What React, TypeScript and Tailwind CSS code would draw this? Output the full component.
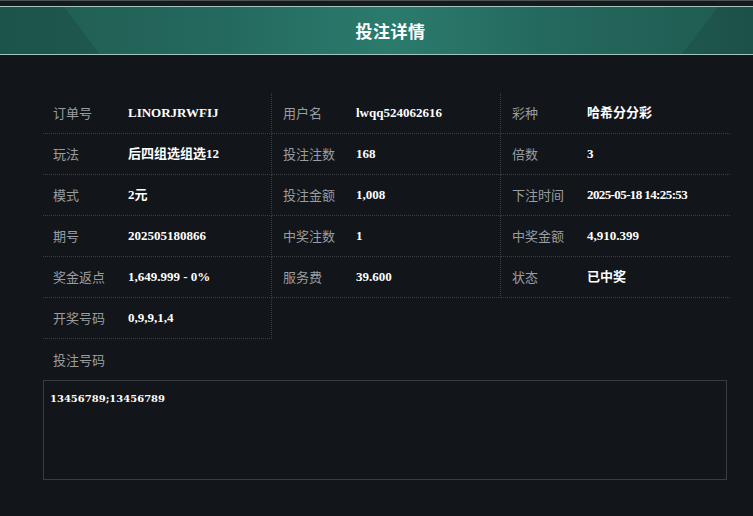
import React from 'react'

const rows: [string, string][][] = [
  [
    ['订单号', 'LINORJRWFIJ'],
    ['用户名', 'lwqq524062616'],
    ['彩种', '哈希分分彩'],
  ],
  [
    ['玩法', '后四组选组选12'],
    ['投注注数', '168'],
    ['倍数', '3'],
  ],
  [
    ['模式', '2元'],
    ['投注金额', '1,008'],
    ['下注时间', '2025-05-18 14:25:53'],
  ],
  [
    ['期号', '202505180866'],
    ['中奖注数', '1'],
    ['中奖金额', '4,910.399'],
  ],
  [
    ['奖金返点', '1,649.999 - 0%'],
    ['服务费', '39.600'],
    ['状态', '已中奖'],
  ],
  [['开奖号码', '0,9,9,1,4']],
]

function Cell({ label, value, col }: { label: string; value: string; col: number }) {
  const isDate = value.includes(':')
  return (
    <div
      className={`flex items-center h-[41px] border-b border-dotted border-[#3a3f44] ${
        col < 2 ? 'border-r' : ''
      } ${col === 0 ? 'pl-[10px]' : 'pl-[11px]'}`}
    >
      <span className={`${col === 1 ? 'w-[73px]' : 'w-[75px]'} shrink-0 text-[13px] text-[#9a9da0]`}>{label}</span>
      <span
        className={`text-[13px] font-bold text-white [font-family:'Liberation_Serif','Noto_Sans_CJK_SC',serif] ${
          isDate ? 'tracking-[-0.6px]' : ''
        }`}
      >
        {value}
      </span>
    </div>
  )
}

export default function App() {
  return (
    <div className="w-[753px] h-[516px] bg-[#121519] overflow-hidden [font-family:'Noto_Sans_CJK_SC','Noto_Sans',sans-serif]">
      {/* top strip */}
      <div className="h-[1px] bg-[#4d5255]" />
      <div className="h-[5px] bg-[#151a1d]" />

      {/* Header */}
      <div className="relative h-[49px] border-t border-b border-[#a6c4be] bg-[linear-gradient(90deg,#1f5c51_0%,#25695e_30%,#2b7b6d_52%,#25695e_72%,#1f5a50_100%)] flex items-center justify-center pl-[28px]">
        <svg className="absolute inset-0 w-full h-full" viewBox="0 0 753 47" preserveAspectRatio="none">
          <polygon points="0,0 64,0 100,47 0,47" fill="#0e2f2a" opacity="0.18" />
          <polygon points="718,0 753,0 753,47 682,47" fill="#0e2f2a" opacity="0.18" />
        </svg>
        <span className="relative text-[17px] font-bold text-white tracking-[0.5px]">投注详情</span>
      </div>

      {/* Body */}
      <div className="pl-[43px] pr-[23px] pt-[38px]">
        <div className="grid grid-cols-3">
          {rows.map((r, ri) =>
            r.map(([label, value], ci) => (
              <Cell key={`${ri}-${ci}`} label={label} value={value} col={ci} />
            ))
          )}
        </div>

        <div className="pl-[10px] h-[41px] flex items-center text-[13px] text-[#9a9da0]">投注号码</div>

        <div className="w-[684px] h-[100px] border border-[#3a3d40] px-[6px] pt-[11px] text-[10px] leading-[14px] font-bold text-white [font-family:'DejaVu_Serif',serif]">
          13456789;13456789
        </div>
      </div>
    </div>
  )
}
